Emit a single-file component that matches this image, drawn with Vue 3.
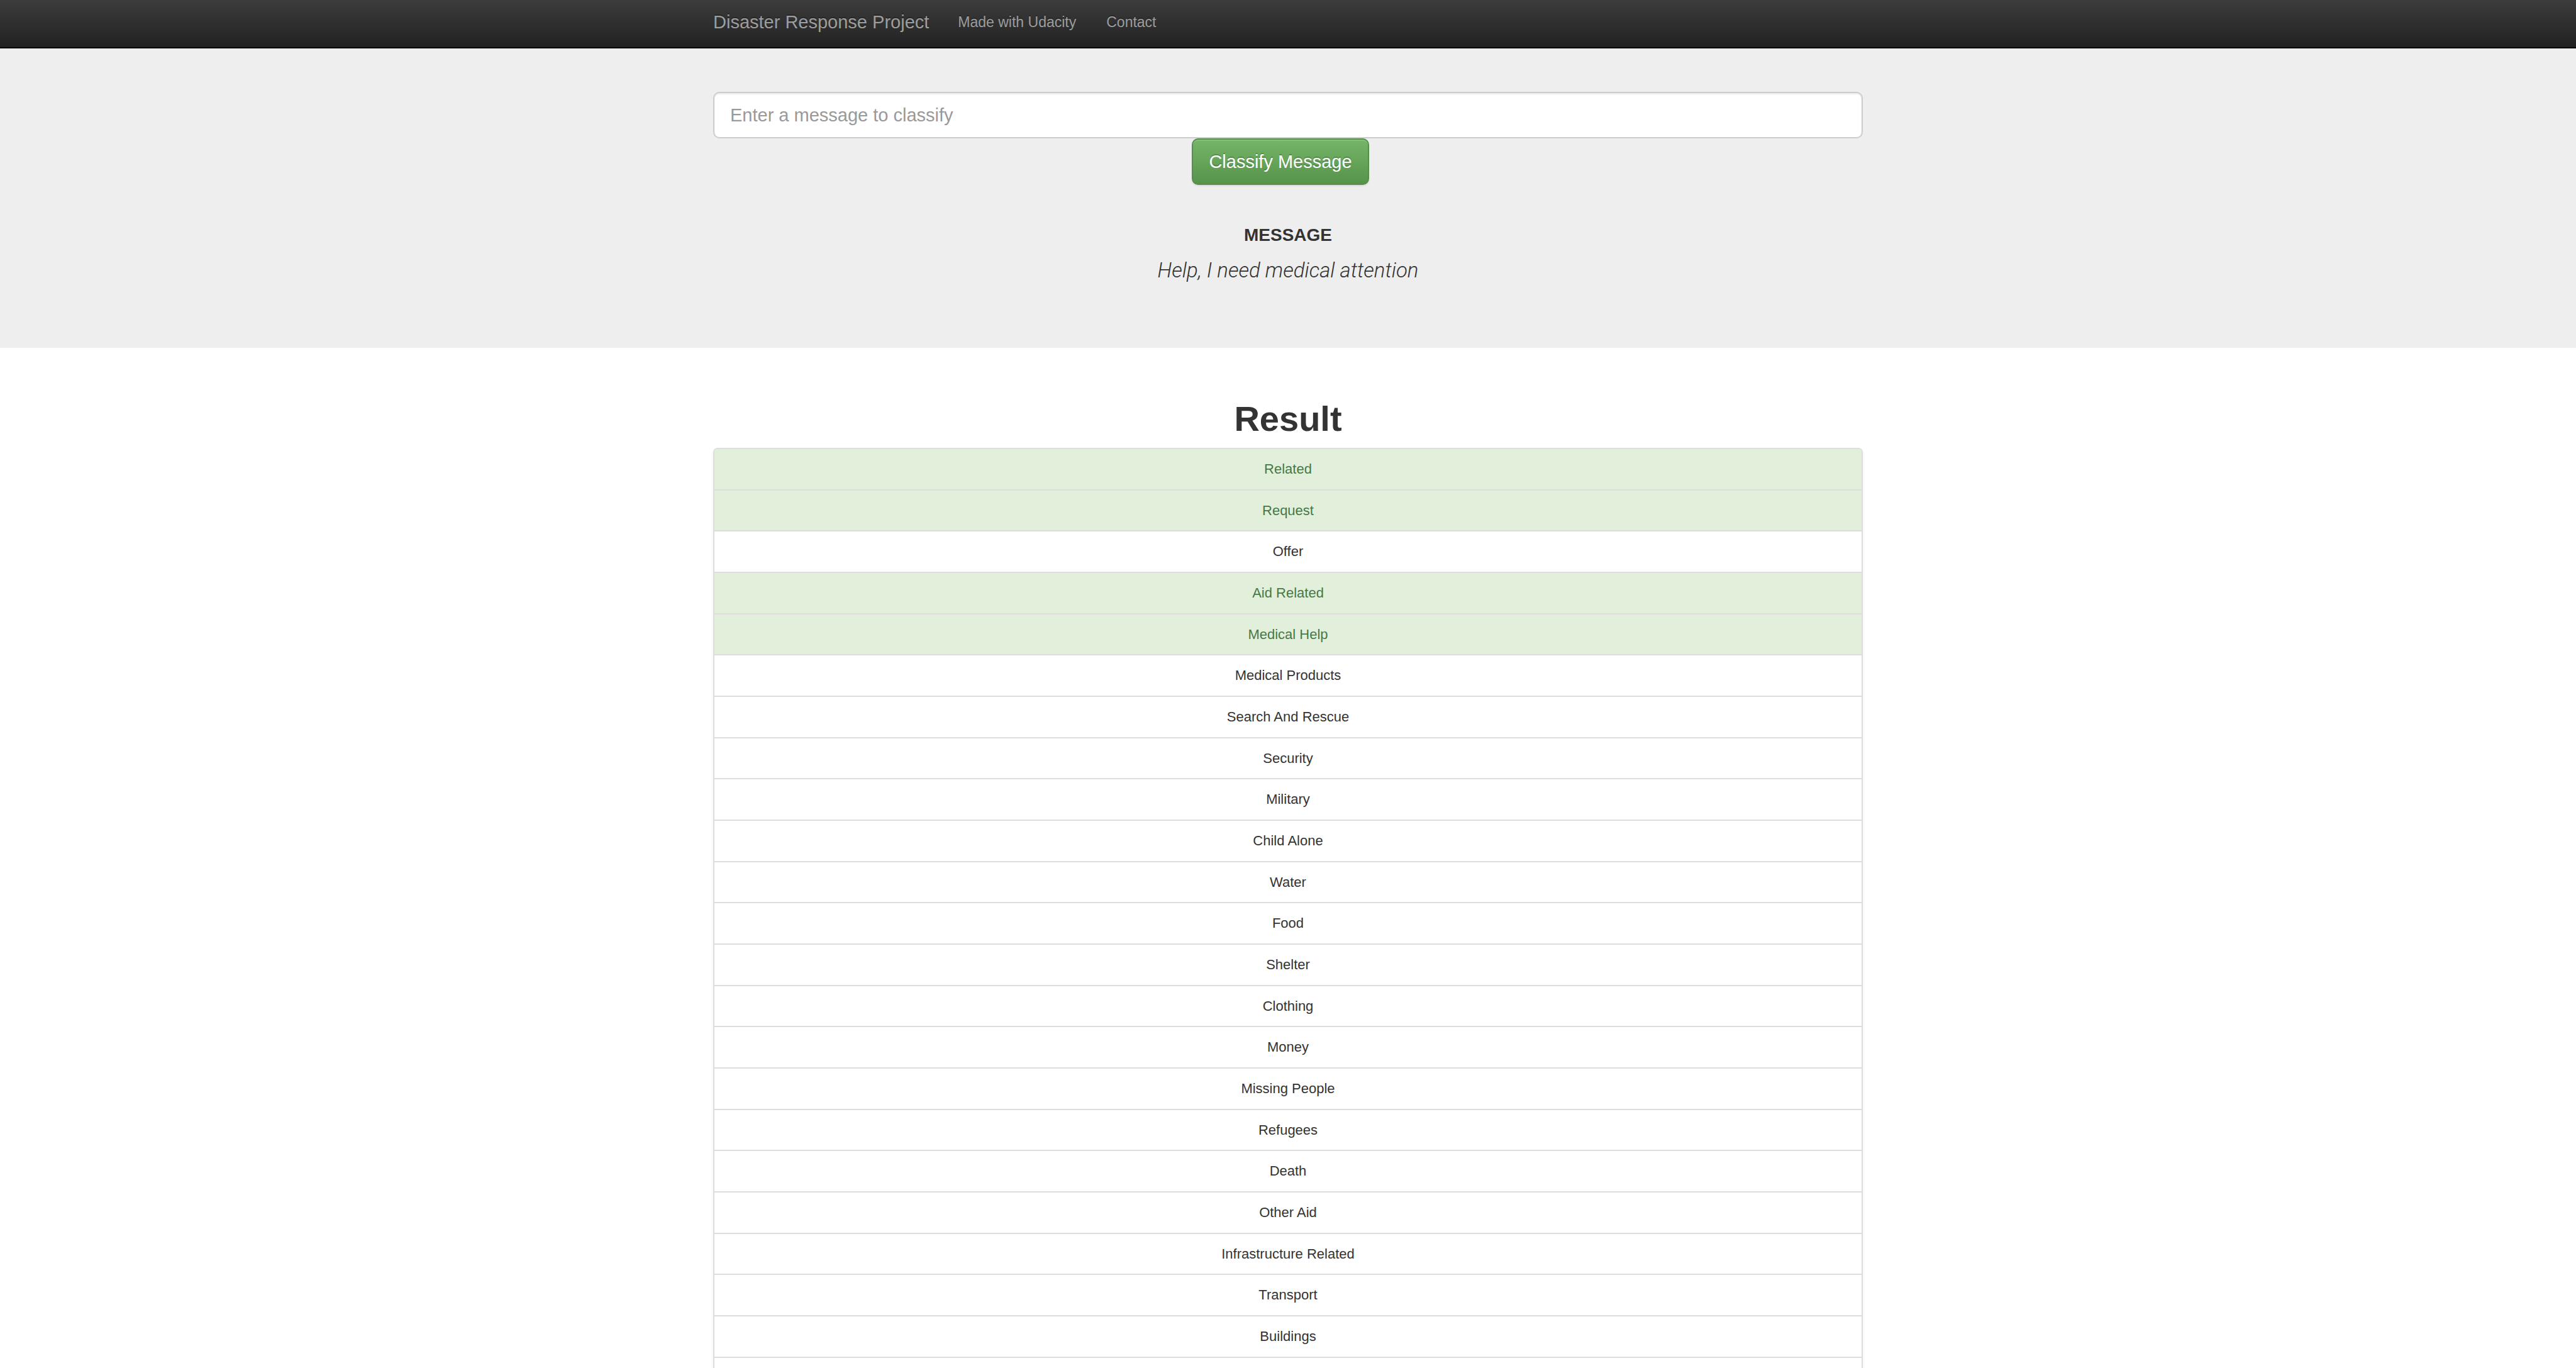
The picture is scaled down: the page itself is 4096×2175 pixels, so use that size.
<script setup>
import { ref } from 'vue'

const query = ref('')
const message = 'Help, I need medical attention'

const categories = [
  { name: 'Related', hit: true },
  { name: 'Request', hit: true },
  { name: 'Offer', hit: false },
  { name: 'Aid Related', hit: true },
  { name: 'Medical Help', hit: true },
  { name: 'Medical Products', hit: false },
  { name: 'Search And Rescue', hit: false },
  { name: 'Security', hit: false },
  { name: 'Military', hit: false },
  { name: 'Child Alone', hit: false },
  { name: 'Water', hit: false },
  { name: 'Food', hit: false },
  { name: 'Shelter', hit: false },
  { name: 'Clothing', hit: false },
  { name: 'Money', hit: false },
  { name: 'Missing People', hit: false },
  { name: 'Refugees', hit: false },
  { name: 'Death', hit: false },
  { name: 'Other Aid', hit: false },
  { name: 'Infrastructure Related', hit: false },
  { name: 'Transport', hit: false },
  { name: 'Buildings', hit: false }
]
</script>

<template>
  <div class="page">
    <nav class="navbar">
      <div class="container navbar-inner">
        <a class="brand" href="#">Disaster Response Project</a>
        <a class="nav-link" href="#">Made with Udacity</a>
        <a class="nav-link" href="#">Contact</a>
      </div>
    </nav>

    <header class="jumbotron">
      <div class="container">
        <form class="classify" @submit.prevent>
          <input
            v-model="query"
            class="query"
            type="text"
            name="query"
            aria-label="Enter a message to classify"
            placeholder="Enter a message to classify"
          />
          <button class="submit" type="submit">Classify Message</button>
        </form>
        <h2 class="label">MESSAGE</h2>
        <p class="lead">{{ message }}</p>
      </div>
    </header>

    <main class="container results">
      <h1 class="title">Result</h1>
      <ul class="list">
        <li v-for="c in categories" :key="c.name" class="row" :class="{ hit: c.hit }">
          {{ c.name }}
        </li>
      </ul>
    </main>
  </div>
</template>

<style>
body {
  margin: 0;
  background: #fff;
}
</style>

<style scoped>
.page {
  display: flex;
  flex-direction: column;
  min-height: 100vh;
  color: #333;
  font-family: "Liberation Sans", Arial, sans-serif;
  font-size: 22px;
}

.container {
  box-sizing: border-box;
  width: 100%;
  max-width: 1828px;
  margin: 0 auto;
}

.navbar {
  border-bottom: 2px solid #080808;
  background: linear-gradient(to bottom, #3c3c3c, #222);
}

.navbar-inner {
  display: flex;
  padding-bottom: 5px;
  line-height: 70px;
}

.brand,
.nav-link {
  color: #9d9d9d;
  text-decoration: none;
  text-shadow: 0 -2px 0 rgba(0, 0, 0, 0.25);
}

.brand {
  margin-right: 22px;
  font-size: 29px;
}

.nav-link {
  padding: 0 24px;
  font-size: 23px;
}

.jumbotron {
  padding: 69px 0 99px;
  background: #eee;
  text-align: center;
}

.classify {
  display: flex;
  flex-direction: column;
  align-items: center;
}

.query,
.submit {
  box-sizing: border-box;
  height: 74px;
  margin: 0;
  padding: 0 25px;
  border-radius: 10px;
  font-family: inherit;
  font-size: 29px;
}

.query {
  width: 100%;
  border: 2px solid #ccc;
  background: #fff;
  color: #555;
  box-shadow: inset 0 2px 2px rgba(0, 0, 0, 0.075);
}

.query::placeholder {
  color: #999;
  opacity: 1;
}

.submit {
  margin-right: 24px;
  border: 2px solid #54904a;
  background: linear-gradient(to bottom, #75b568, #57934b);
  color: #fff;
  text-shadow: 0 -2px 0 rgba(0, 0, 0, 0.2);
  box-shadow: inset 0 2px 0 rgba(255, 255, 255, 0.15), 0 2px 2px rgba(0, 0, 0, 0.075);
}

.label {
  margin: 64px 0 16px;
  font-size: 28px;
  font-weight: 700;
  line-height: 32px;
}

.lead {
  margin: 0;
  font-family: Roboto, "Liberation Sans", sans-serif;
  font-size: 33px;
  font-style: italic;
  font-weight: 300;
  line-height: 48px;
}

.results {
  display: flex;
  flex: 1;
  flex-direction: column;
  padding-top: 81px;
  text-align: center;
}

.title {
  margin: 0 0 14px;
  font-size: 56px;
  font-weight: 700;
  line-height: 64px;
}

.list {
  flex: 1;
  margin: 0;
  padding: 0;
  border: 2px solid #ddd;
  border-bottom: 0;
  border-radius: 7px 7px 0 0;
  box-shadow: 0 2px 4px rgba(0, 0, 0, 0.08);
  list-style: none;
}

.row {
  padding: 16px 24px;
  border-bottom: 2px solid #ddd;
  line-height: 1.44;
}

.row:first-child {
  border-radius: 5px 5px 0 0;
}

.hit {
  background: #e1efdb;
  color: #477946;
}
</style>
